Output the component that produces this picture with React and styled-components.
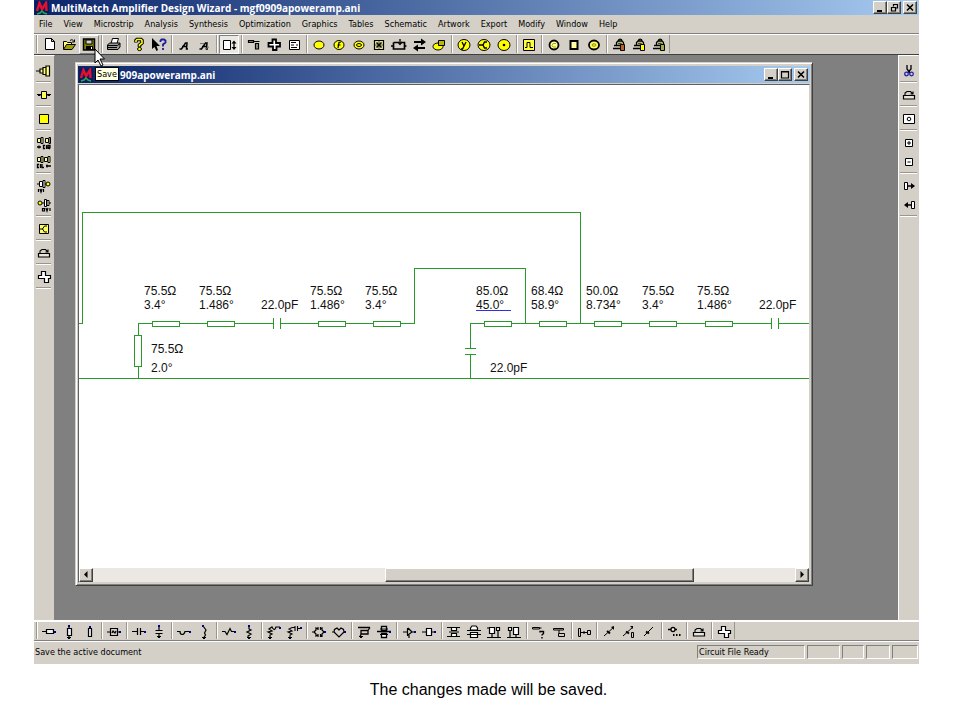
import React from "react";
import styled, { createGlobalStyle, css } from "styled-components";

const FACE = "#d4d0c8";
const UI = '"DejaVu Sans Condensed", "DejaVu Sans", sans-serif';
const TITLE = '"Open Sans", "Noto Sans", sans-serif';

const GlobalStyle = createGlobalStyle`
  * { box-sizing: border-box; }
  body { margin: 0; background: #fff; font-family: ${UI}; color: #000; }
  button { font: inherit; color: inherit; }
`;

const Slide = styled.div`
  padding: 0 41px 0 34px;
`;
const AppWindow = styled.main`
  display: flex;
  flex-direction: column;
  background: ${FACE};
`;
const TitleBar = styled.header`
  display: flex;
  align-items: center;
  gap: 2px;
  height: ${(p) => (p.$child ? 17 : 15)}px;
  padding: 0 2px 0 1px;
  background: linear-gradient(to right, #0a246a, #a6caf0);
  color: #fff;
  line-height: 14px;
  white-space: nowrap;
`;
const TitleText = styled.h1`
  flex: 1;
  margin: 0;
  padding-left: ${(p) => (p.$inset ? 25 : 0)}px;
  font-family: ${TITLE};
  font-size: 10px;
  font-weight: bold;
`;
const CaptionButtons = styled.div`
  display: flex;
  button:last-child { margin-left: 2px; }
`;
const raised = css`
  background: ${FACE};
  border: 1px solid;
  border-color: #fff #404040 #404040 #fff;
  box-shadow: inset -1px -1px 0 #808080;
`;
const CaptionButton = styled.button`
  ${raised}
  display: flex;
  width: 14px;
  height: 13px;
  padding: 0;
  svg { flex: none; }
`;
const MenuBar = styled.nav`
  display: flex;
  gap: 11px;
  height: 18px;
  padding: 0 5px;
  align-items: center;
  font-size: 9px;
`;
const MenuItem = styled.button`
  border: 0;
  padding: 0;
  background: none;
  line-height: 16px;
`;
const ToolBar = styled.div`
  display: flex;
  height: ${(p) => (p.$low ? 21 : 22)}px;
  padding-left: 2px;
  border-top: 1px solid ${(p) => (p.$low ? "#fff" : "#808080")};
  border-bottom: 1px solid ${(p) => (p.$low ? "#808080" : "#404040")};
  box-shadow: inset 0 1px 0 #fff;
`;
const SideBar = styled.div`
  display: flex;
  flex-direction: column;
  width: 21px;
  padding: 5px ${(p) => (p.$right ? 0 : 2)}px 0 0;
  border-top: 1px solid #fff;
  border-right: 1px solid ${(p) => (p.$right ? FACE : "#808080")};
  border-left: 1px solid ${(p) => (p.$right ? "#fff" : FACE)};
`;
const ToolGroup = styled.div`
  display: flex;
  flex-direction: ${(p) => (p.$vertical ? "column" : "row")};
  ${(p) =>
    p.$vertical
      ? "align-items: center; border-bottom: 1px solid #9a968e; box-shadow: 0 1px 0 #fff; padding-bottom: 1px; margin: 0 1px 3px;"
      : "border-left: 1px solid #9a968e; box-shadow: inset 1px 0 0 #fff; padding-left: 2px; margin: 1px 2px 1px 0;"}
  &:last-child { ${(p) => (p.$vertical ? "" : "border-right: 1px solid #9a968e;")} }
`;
const ToolButton = styled.button`
  position: relative;
  display: flex;
  align-items: center;
  justify-content: center;
  width: ${(p) => (p.$vertical ? 16 : 20)}px;
  height: 19px;
  padding: 0;
  border: 1px solid transparent;
  background: ${(p) => (p.$state === "pressed" ? "#ebe8e3" : "none")};
  border-color: ${(p) =>
    p.$state === "pressed" ? "#808080 #fff #fff #808080" : p.$state === "hover" ? "#fff #808080 #808080 #fff" : "transparent"};
  svg { flex: none; }
`;
const Tooltip = styled.span`
  position: absolute;
  z-index: 2;
  left: 15px;
  top: 31px;
  height: 14px;
  padding: 0 1px;
  border: 1px solid #000;
  background: #ffffe1;
  font-size: 9px;
  line-height: 12px;
`;
const Pointer = styled.svg`
  position: absolute;
  z-index: 3;
  left: 14px;
  top: 12px;
`;
const Middle = styled.div`
  display: flex;
`;
const Workspace = styled.section`
  flex: 1;
  min-width: 0;
  padding: 7px 85px 34px 20px;
  background: #808080;
`;
const ChildWindow = styled.section`
  padding: 3px 2px 2px;
  background: ${FACE};
  border: 1px solid;
  border-color: ${FACE} #404040 #404040 ${FACE};
  box-shadow: inset 1px 1px 0 #fff, inset -1px -1px 0 #808080;
`;
const Client = styled.div`
  margin-top: 1px;
  border: 1px solid;
  border-color: #606060 ${FACE} ${FACE} #606060;
  background: #fff;
`;
const Drawing = styled.svg`
  display: block;
  width: 100%;
  height: 483px;
  font-family: "Liberation Sans", Arial, sans-serif;
  font-size: 12px;
`;
const ScrollBar = styled.div`
  display: flex;
  justify-content: space-between;
  height: 14px;
  background: #ebe8e4;
`;
const ScrollArrow = styled.button`
  ${raised}
  width: 14px;
  padding: 0;
  display: flex;
`;
const ScrollTrack = styled.div`
  flex: 1;
  display: flex;
  padding: 0 101px 0 292px;
`;
const ScrollThumb = styled.div`
  ${raised}
  flex: 1;
`;
const StatusBar = styled.footer`
  display: flex;
  gap: 2px;
  height: 23px;
  padding: 3px 1px 5px;
  border-top: 1px solid #fff;
  font-size: 9px;
  line-height: 13px;
`;
const StatusText = styled.p`
  flex: 1;
  margin: 0;
  padding-top: 1px;
`;
const StatusPane = styled.div`
  width: ${(p) => p.$w}px;
  padding-left: 1px;
  border: 1px solid;
  border-color: #808080 #fff #fff #808080;
  white-space: nowrap;
`;
const Caption = styled.p`
  margin: 16px 0 0 24px;
  text-align: center;
  font-family: "Liberation Sans", Arial, sans-serif;
  font-size: 16px;
  line-height: 20px;
`;

const Y = "#ff0";
const P = (d, fill = "none", w = 1, stroke = "#000") => <path d={d} fill={fill} stroke={stroke} strokeWidth={w} />;
const Blue = (x, y) => <rect x={x - 1} y={y - 1} width="2" height="2" fill="#00008b" stroke="none" />;
const Dot = (x, y) => <path d={`M${x - 2} ${y - 1}h4v1h-1v1h-2v-1h-1z`} fill="#000" stroke="none" />;
const E = (rx, ry, w = 1, fill = Y) => <ellipse cx="8" cy="8" rx={rx} ry={ry} fill={fill} stroke="#000" strokeWidth={w} />;

const letterA = P("M3.500 12h2l4-6h1.500l-.5 6h1.500M6 9.500h5", "none", 1.5);
const amp = (
  <>
    {P("M5.500 8.500v-3l1.500-1.500h4l1.500 1.500v2M7.500 4c0-2.500 3.500-2.500 3.500 0", "#d8d860", 1.3)}
    {P("M3 8.500h6M2 11.500h7", "none", 1.3)}
    {P("M7 6.500h3v4", "none", 1.3, "#446")}
  </>
);
const hat = (
  <>
    {P("M2.500 8.500h11v3.500h-11z", "#e8e5df", 1.2)}
    {P("M4 8V6l2-1.500h3.500L12 7M9.500 7H12V4.500", "none", 1.1)}
  </>
);
const outline = P("M5.500 2.500h4v4h5v3h-2v4h-4v-4h-6v-3h3z", "#fff", 1.2);

const ICONS = {
  new: P("M4.500 1.500h6l3 3v8h-9zM10.500 1.500v3h3", "#fff"),
  open: <>{P("M2.500 12V4.500h3l1 1h4v2", "#ffff80")}{P("M2.500 12.500l3-5h9l-3.500 5z", "#a0a000")}{P("M9 3.500c2-1.500 3-.5 4 1M13.500 2.500v2.500h-2.500")}</>,
  save: <>{P("M2.500 2h11v11h-11z", "#808000", 1.5)}{P("M5 3h6v4H5z", "#d4d0c8")}<path d="M5 9h7v4H5z" fill="#000" /><path d="M10 10h1v2h-1z" fill="#fff" /></>,
  print: <>{P("M5 6.500l1.500-5h6l-1.500 5z", "#fff")}{P("M1.500 8l2-2h10.500v4l-2 2.500H1.500z", "#999")}{P("M2 8.500h9.500l2.500-2M2 10.500h9")}</>,
  help: <>{P("M5 5.500V3.500l1-1h4l1 1v2.500l-2.500 2v2", "none", 3.6)}{P("M5 5V3.500l1-1h4l1 1v2.500l-2.500 2V9.500", "none", 1.6, Y)}<ellipse cx="8.500" cy="12" rx="2" ry="1.600" fill={Y} stroke="#000" /></>,
  context: <><path d="M1 1v11l2.500-2 2 4 1.500-1-1.500-4H9z" fill="#000" />{P("M9.500 5V3.500l1-1h2.500l1.500 1v2l-2.500 2v2M12 11v2", "none", 1.8, "#1c1c9c")}</>,
  letter: letterA,
  letter2: <>{letterA}{P("M4 6.500h4M9 12l4-2", "none", 1, "#777")}</>,
  height: <>{P("M2.500 3.500h7v9h-7z", "#fff")}{P("M13 5v7", "none", 1.3)}<path d="M10.500 6.500L13 3.500l2.500 3zM10.500 10l2.500 3 2.500-3z" /></>,
  hammer: <>{P("M2.500 3.500h5v2h-5zM7.500 4.500h6", "#777", 1.2)}{P("M9.500 6.500h3v5.500h-3z", "#998", 1.2)}</>,
  cross: P("M6.500 2.500h3.500v3.500h4v3.500h-3.500v3.500h-3.500v-3.500h-4.500V6h4z", "#fff", 1.8),
  list: <>{P("M3.500 3.500h10v9h-10z", "#fff")}{P("M5 5.500h5M5 8h3M5 10.500h6M10 8h2")}</>,
  ellipse: E(5, 4),
  f: <>{E(5, 4.5)}{P("M7 11l1-5.500 2-.5M6.500 8h3", "none", 1.2)}</>,
  rings: <>{E(5, 4)}{E(2.500, 1.500)}</>,
  hatch: <>{P("M3.500 3.500h9v9h-9z", "#e8e890", 1.2)}{P("M5.500 5.500l5 5M10.500 5.500l-5 5", "none", 1.5)}{P("M8 4v8M4 8h8", "none", .6)}</>,
  loop: <>{P("M2.500 5.500h5M10 5.500h3.500V9h2M0 9h2.500M2.500 5.500V12h11V9", "none", 1.7)}{P("M9 2v4M7 5l2 2.500L11 5", "none", 1.3)}</>,
  swap: <>{P("M3 5h8M5 11h9", "none", 2)}<path d="M10 1.500L15 5l-5 3.500zM7 7.500L2 11l5 3.500z" /></>,
  combo: <><ellipse cx="7" cy="9.500" rx="5" ry="3.500" fill={Y} stroke="#000" />{P("M7.500 3.500h6v5h-6z", "#b8b800")}</>,
  y: <>{E(6, 5.5)}{P("M6 5l2 4 2-4M8 9l-1.500 3H5", "none", 1.3)}</>,
  split: <>{E(6, 5.5)}{P("M3 8h4M11 5H8.500L7 8l1.500 3H11", "none", 1.4)}</>,
  dot: <>{E(6, 5.5)}<circle cx="8" cy="8" r="1.300" /></>,
  pulse: <>{P("M2.500 2.500h11v11h-11z", "#ffff40")}{P("M4 10.500h2V5.500h3v5h3")}</>,
  c1: <>{E(4.500, 4.500, 1.8, "#ffffa0")}{P("M10 6.500H7l-1 2 1 1.500h3", "none", 1, "#aa0")}</>,
  box: P("M4.500 4h7v8h-7z", "#ffffa0", 2),
  c2: <>{E(5, 4.500, 1.8, "#ffff60")}<ellipse cx="8" cy="8" rx="2" ry="1.200" fill="none" stroke="#880" /></>,
  amp1: <>{amp}{P("M9.500 7.500h4v6h-4z", "#c06020")}</>,
  amp2: <>{amp}{P("M9.500 7.500h4v6h-4z", Y)}</>,
  amp3: <>{amp}{P("M9.500 7.500h4v6h-4z", "#a0b040")}</>,

  steps: <>{P("M0 8h4M4 6h3v4H4zM7 4.500h3v7H7zM10 3h3.500v10H10z", "#ffff80", 1.2)}</>,
  match: <>{P("M2 8h3M11 8h3")}{P("M5.500 4.500h5v7h-5z", "#ffff60")}{Dot(3, 8)}{Dot(13, 8)}</>,
  square: P("M3.500 3.500h9v9h-9z", Y),
  cirIn: <>{P("M1.500 3.500h3v4h-3zM5 2.500h2v6H5zM9.500 3.500h3v4h-3zM13 2.500h1.500v6H13z", "#ffffa0")}{P("M1 12h4M3 10.500v3M9 10.500H7.500v3H9M10.500 10v4M12 14v-3.500h2v2h-2l2 1.500", "none", 1.3)}</>,
  cilOut: <>{P("M1.500 3.500h3v4h-3zM5 2.500h2v6H5zM8.500 3.500h3v4h-3zM12 2.500h2v6h-2z", "#ffffa0")}{P("M3 10.500H1.500v3H3M4.500 10v4M6 10v3.500h2M10 12h5M11 10.500v3", "none", 1.3)}</>,
  ivi: <>{P("M1 6h2M3.500 3.500h3v5h-3zM7 2.500h2v7H7zM9 6h2", "#fff")}<circle cx="12" cy="6" r="2" fill={Y} stroke="#000" />{P("M2.500 11v3M4 11l1 3 1-3M7.500 11v3", "none", 1.2)}</>,
  ovi: <><circle cx="4" cy="6" r="2" fill={Y} stroke="#000" />{P("M6 6h2M8.500 2.500h2v7h-2zM11 3.500h2v5h-2zM13 6h2", "#fff")}{P("M6.500 11.500h2v2.500h-2zM10 11l1 3 1-3M14 11v3", "none", 1.2)}</>,
  splitbox: <>{P("M3.500 3.500h9v9h-9z", "#ffff60")}{P("M4 8h3M11 5H8.500L6.500 8l2 3H11")}</>,
  hat,
  outline,

  cut: <>{P("M6 2v4l3 4M10 2v4L7 9.500", "none", 1.3)}<circle cx="5.500" cy="11" r="1.800" fill="none" stroke="#22a" strokeWidth="1.300" /><circle cx="10.500" cy="11" r="1.800" fill="none" stroke="#22a" strokeWidth="1.300" /></>,
  center: <>{P("M2.500 3.500h11v9h-11z", "#fff")}<circle cx="8" cy="8" r="1.800" fill="none" stroke="#000" /></>,
  plus: <>{P("M4.500 4.500h7v7h-7z", "#fff")}{P("M6 8h4M8 6v4")}</>,
  minus: <>{P("M4.500 4.500h7v7h-7z", "#fff")}{P("M6.500 8h3")}</>,
  right: <>{P("M3.500 4.500h3v7h-3z", "#fff")}{P("M7 8h6", "none", 1.5)}<path d="M10 5l4 3-4 3z" /></>,
  left: <>{P("M10.500 4.500h3v7h-3z", "#fff")}{P("M4 8h6", "none", 1.5)}<path d="M7 5L3 8l4 3z" /></>,

  lineH: <>{P("M1 7.500h4M12 7.500h3M5.500 5.500h7v4h-7z", "#eee", 1.2)}{Blue(14, 8)}</>,
  lineV: <>{P("M8 2v2M8 11v3M6.500 4.500h4v7h-4z", "#eee", 1.2)}{Blue(8, 2)}{Dot(8, 14)}</>,
  lineV2: <>{P("M9 2v2M7.500 4.500h3v8h-3z", "#eee", 1.2)}{Blue(9, 3)}</>,
  noise: <>{P("M1 8h3M12 8h3M4.500 4.500h7v7h-7zM6 9l1-2 2 2 1-2", "none", 1.2)}{Blue(14, 8)}</>,
  capH: <>{P("M1 7.500h5M6.500 4v7M9.500 4v7M10 7.500h5", "none", 1.2)}{Blue(14, 8)}</>,
  capV: <>{P("M8 2v4M4.500 6.500h7M4.500 9.500h7M8 10v3", "none", 1.2)}{Blue(8, 2)}{Dot(8, 13)}</>,
  indH: <>{P("M1 7.500h3c0 4 4 4 5 0h6", "none", 1.2)}{Blue(14, 8)}</>,
  indV: <>{P("M7 2l3 4-1.500 3 1 2-2 3", "none", 1.2)}{Blue(7, 2)}{Dot(8, 14)}</>,
  resH: <>{P("M1 7.500h3l2 3 3-6 1.500 3h4", "none", 1.2)}{Blue(14, 8)}</>,
  resV: <>{P("M8 2v3l2 1-4 2 4 2-3 2v2", "none", 1.2)}{Blue(8, 2)}{Dot(8, 14)}</>,
  rl: <>{P("M4 13v-2l2-1-4-2 4-1-3-2 3-2c2 4 3 3 4 0h4", "none", 1.2)}{Blue(14, 4)}{Dot(4, 14)}</>,
  rc: <>{P("M4 13v-2l2-1-4-2 4-1-3-2 3-1.500h2.500M9 2v5M11.500 2v5M12 4.500h3", "none", 1.1)}{Blue(15, 4)}{Dot(4, 14)}</>,
  burst: <>{P("M1 8h2M13 8h2M3 8l2-2V4l2 1M9 5l2-1v2l2 2-2 2v2l-2-1M7 11l-2 1v-2L3 8M7 3v3M9.500 3v3M7 10v3M9.500 10v3", "none", 1.2)}{Blue(14, 8)}</>,
  heart: <>{P("M1 8h2M13 8h2M8 6L6 4 3.500 5.500 3 8l5 5 5-5-.5-2.500L10 4z", "none", 1.2)}{Blue(14, 8)}</>,
  coupled: <>{P("M2 3.500h12M5 6.500h7v3.500H5zM12 6.500l2-3M5 10l-1 3", "none", 1.3)}{Dot(5, 13)}</>,
  joint: <>{P("M1 7.500h14M5.500 2.500h5v4h-5zM5.500 9.500h5v4h-5z", "#fff", 1.3)}{P("M4 5h8M4 10.500h8", "none", 1)}{Blue(14, 8)}</>,
  fet: <>{P("M2 8h4M6.500 4v8M7 4l4 4-4 3M11 8h4M8 11v3", "none", 1.2)}{Blue(14, 8)}</>,
  block: <>{P("M1 8h4M11 8h4M5.500 4.500h5v7h-5z", "#fff", 1.2)}{Blue(14, 8)}</>,
  t1: P("M1 3.500h5M10 3.500h4M1 12.500h5M10 12.500h4M5.500 3.500h5v3h-5zM5.500 9.500h5v3h-5zM3 8h10", "#fff", 1.2),
  t2: P("M1 6.500h14M1 10.500h14M4.500 4l1.500-2h4l1.500 2v2h-7zM4.500 8.500h7v5h-7z", "#fff", 1.2),
  t3: P("M1 13.500h14M1 4h2M3.500 3.500h5v6h-5zM6 9.500v4M10.500 3.500h3v3h-3zM12 7v6", "#fff", 1.2),
  t4: P("M1 13.500h14M2.500 3.500h3v3h-3zM7.500 3.500h5v7h-5zM10 10v3M4 7v6", "#fff", 1.2),
  ask: <>{P("M1.500 3.500h7v1.500h-7zM8.500 4h2")}{P("M9 8.500V7.500h3.500v2L11 11v.5M11 13v1.500", "none", 1.4)}</>,
  bars: <>{P("M2.500 4.500h10v1.500h-10zM7.500 9.500h6v3h-6zM8 6v3")}</>,
  link: <>{P("M2.500 4.500h2v8h-2zM5 8.500h6M8 7v3M11.500 6.500h3v4h-3z")}</>,
  diag1: <>{P("M3 12l10-9")}{P("M6 7l3 2.500", "none", 2)}<path d="M13 2v4l-3-3z" /></>,
  diag2: <>{P("M2 12l10-9M10.500 8.500h2v5h-2z")}{P("M5 7.500l3 2", "none", 2)}<path d="M12 2v3l-3-3z" /></>,
  diag3: <>{P("M3 12l9-9")}{P("M5 7.500l3 2", "none", 2)}</>,
  node: <>{P("M2 5.500h3M9 5.500h2", "none", 1.3)}<circle cx="7" cy="5.500" r="2" fill="#fff" stroke="#000" strokeWidth="1.300" />{P("M7 11h1.500M10 11h1.500M13 11h1.500", "none", 2)}</>,
};

const TOP = [
  ["new", "open", "save"], ["print"], ["help", "context"], ["letter", "letter2"], ["height"],
  ["hammer", "cross", "list"], ["ellipse", "f", "rings", "hatch", "loop", "swap", "combo"],
  ["y", "split", "dot"], ["pulse"], ["c1", "box", "c2"], ["amp1", "amp2", "amp3"],
];
const LEFT = [["steps"], ["match"], ["square"], ["cirIn", "cilOut"], ["ivi", "ovi"], ["splitbox"], ["hat"], ["outline"]];
const RIGHT = [["cut"], ["hat"], ["center"], ["plus", "minus"], ["right", "left"]];
const BOTTOM = [
  ["lineH", "lineV", "lineV2"], ["noise"], ["capH", "capV"], ["indH", "indV"], ["resH", "resV"],
  ["rl", "rc"], ["burst", "heart"], ["coupled", "joint"], ["fet", "block"], ["t1", "t2", "t3", "t4"],
  ["ask", "bars"], ["link"], ["diag1", "diag2", "diag3"], ["node"], ["hat"], ["outline"],
];
const MENUS = ["File", "View", "Microstrip", "Analysis", "Synthesis", "Optimization", "Graphics", "Tables", "Schematic", "Artwork", "Export", "Modify", "Window", "Help"];
const STATES = { save: "hover", height: "pressed" };

function Groups({ groups, vertical }) {
  return groups.map((names) => (
    <ToolGroup key={names[0]} $vertical={vertical}>
      {names.map((name) => (
        <ToolButton key={name} aria-label={name} $vertical={vertical} $state={STATES[name]}>
          <svg width="16" height="16" viewBox="0 0 16 16">{ICONS[name]}</svg>
          {name === "save" && (
            <>
              <Tooltip role="tooltip">Save</Tooltip>
              <Pointer width="12" height="20" viewBox="0 0 12 20">
                <path d="M1 1v14l3-3 3 6 2-1-3-6h4.500z" fill="#fff" stroke="#000" />
              </Pointer>
            </>
          )}
        </ToolButton>
      ))}
    </ToolGroup>
  ));
}

function Logo() {
  return (
    <svg width="14" height="14" viewBox="0 0 14 14">
      <rect width="14" height="14" fill="#0a1c5c" />
      <path d="M2 10l2.500-8 2.500 6 4-6 .5 8" fill="none" stroke="#e01030" strokeWidth="2.500" />
      <path d="M2 13l3-1 2-2 2 2 3 1" fill="none" stroke="#20b050" strokeWidth="1.500" />
    </svg>
  );
}

function WindowButtons({ restore }) {
  const marks = [
    ["Minimize", "M3 9h5", 2],
    restore ? ["Restore", "M5 2.500h5M5.500 2v2.500M9.500 2v4H8M3 5.500h5M3.500 5v4h4V5", 1.2] : ["Maximize", "M2.500 2.500h7v6.500h-7zM2 3h8", 1.2],
    ["Close", "M3 2.500l6 6M9 2.500l-6 6", 1.6],
  ];
  return (
    <CaptionButtons>
      {marks.map(([label, d, w]) => (
        <CaptionButton key={label} aria-label={label}>
          <svg width="12" height="11" viewBox="0 0 12 11"><path d={d} fill="none" stroke="#000" strokeWidth={w} /></svg>
        </CaptionButton>
      ))}
    </CaptionButtons>
  );
}

const LABELS = [
  [65, 210, "75.5Ω"], [65, 224, "3.4°"], [120, 210, "75.5Ω"], [120, 224, "1.486°"], [182, 224, "22.0pF"],
  [231, 210, "75.5Ω"], [231, 224, "1.486°"], [286, 210, "75.5Ω"], [286, 224, "3.4°"],
  [397, 210, "85.0Ω"], [397, 224, "45.0°"], [452, 210, "68.4Ω"], [452, 224, "58.9°"],
  [507, 210, "50.0Ω"], [507, 224, "8.734°"], [563, 210, "75.5Ω"], [563, 224, "3.4°"],
  [618, 210, "75.5Ω"], [618, 224, "1.486°"], [680, 224, "22.0pF"],
  [72, 268, "75.5Ω"], [72, 287, "2.0°"], [411, 287, "22.0pF"],
];
const SERIES = [73, 128, 239, 294, 405, 460, 515, 570, 626];

function Schematic() {
  return (
    <Drawing role="img" aria-label="Amplifier circuit schematic">
      <g fill="none" stroke="#299a29" shapeRendering="crispEdges">
        <path d="M0 238.500h3.500v-111h498v111M335.500 238.500v-55h111v55" />
        <path d="M59.500 293.500v-55H194M201 238.500h134M391.500 263v-24.500H692M699 238.500h2000M391.500 269v24M0 293.500h2699" />
        <path d="M194.500 233v11M201.500 233v11M692.500 233v11M699.500 233v11M386 263.500h11M386 269.500h11" />
        {SERIES.map((x) => <rect key={x} x={x + 0.5} y="236.500" width="27" height="5" fill="#fff" />)}
        <rect x="55.500" y="250.500" width="7" height="31" fill="#fff" />
        <path d="M397 225.500h35" stroke="#3030e0" />
      </g>
      {LABELS.map(([x, y, text]) => <text key={`${x}-${y}`} x={x} y={y} fill="#111">{text}</text>)}
    </Drawing>
  );
}

function Arrow({ d, label }) {
  return (
    <ScrollArrow aria-label={label}>
      <svg width="12" height="12" viewBox="0 0 12 12"><path d={d} /></svg>
    </ScrollArrow>
  );
}

export default function App() {
  return (
    <>
      <GlobalStyle />
      <Slide>
        <AppWindow>
          <TitleBar>
            <Logo />
            <TitleText>MultiMatch Amplifier Design Wizard - mgf0909apoweramp.ani</TitleText>
            <WindowButtons restore />
          </TitleBar>
          <MenuBar>{MENUS.map((m) => <MenuItem key={m}>{m}</MenuItem>)}</MenuBar>
          <ToolBar role="toolbar"><Groups groups={TOP} /></ToolBar>
          <Middle>
            <SideBar role="toolbar"><Groups groups={LEFT} vertical /></SideBar>
            <Workspace>
              <ChildWindow>
                <TitleBar as="div" $child>
                  <Logo />
                  <TitleText as="h2" $inset>909apoweramp.ani</TitleText>
                  <WindowButtons />
                </TitleBar>
                <Client>
                  <Schematic />
                  <ScrollBar>
                    <Arrow label="Scroll left" d="M7.500 2v7L4 5.500z" />
                    <ScrollTrack><ScrollThumb /></ScrollTrack>
                    <Arrow label="Scroll right" d="M4.500 2v7L8 5.500z" />
                  </ScrollBar>
                </Client>
              </ChildWindow>
            </Workspace>
            <SideBar role="toolbar" $right><Groups groups={RIGHT} vertical /></SideBar>
          </Middle>
          <ToolBar role="toolbar" $low><Groups groups={BOTTOM} /></ToolBar>
          <StatusBar>
            <StatusText>Save the active document</StatusText>
            <StatusPane $w={108}>Circuit File Ready</StatusPane>
            <StatusPane $w={33} />
            <StatusPane $w={22} />
            <StatusPane $w={24} />
            <StatusPane $w={26} />
          </StatusBar>
        </AppWindow>
        <Caption>The changes made will be saved.</Caption>
      </Slide>
    </>
  );
}
